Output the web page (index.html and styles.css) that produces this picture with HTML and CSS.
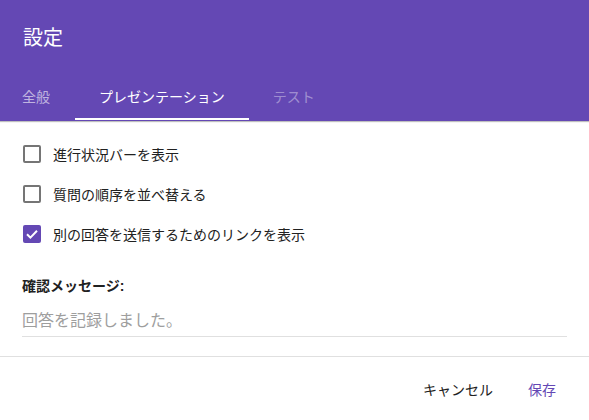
FILE: index.html
```html
<!DOCTYPE html>
<html lang="ja">
<head>
    <meta charset="UTF-8" />
    <title>設定</title>
    <link rel="stylesheet" href="styles.css">
</head>
<body>
    <div class="dialog">
        <div class="header">
            <h2 class="title">設定</h2>
            <div class="tabs">
                <div class="tab">全般</div>
                <div class="tab active">プレゼンテーション</div>
                <div class="tab disabled">テスト</div>
            </div>
        </div>

        <div class="content">
            <label class="check-row">
                <span class="checkbox"></span>
                <span>進行状況バーを表示</span>
            </label>
            <label class="check-row">
                <span class="checkbox"></span>
                <span>質問の順序を並べ替える</span>
            </label>
            <label class="check-row">
                <span class="checkbox checked">
                    <svg width="18" height="18" viewBox="0 0 18 18">
                        <polyline points="4,9.2 7.4,12.6 14,5.8" fill="none" stroke="#fff" stroke-width="2" />
                    </svg>
                </span>
                <span>別の回答を送信するためのリンクを表示</span>
            </label>

            <div class="field-label">確認メッセージ:</div>
            <div class="text-field">回答を記録しました。</div>
        </div>

        <div class="footer">
            <button class="btn">キャンセル</button>
            <button class="btn primary">保存</button>
        </div>
    </div>
</body>
</html>
```

FILE: styles.css
```css
/* Global Styles */
body {
    margin: 0;
    font-family: "Liberation Sans", "Noto Sans CJK JP", sans-serif;
    background-color: #fff;
    color: #212121;
}

.dialog {
    width: 589px;
    height: 420px;
    overflow: hidden;
}

/* Header with tabs */
.header {
    background-color: #6448b4;
    padding-top: 24px;
    height: 97px;
    box-shadow: 0 1px 1px rgba(0, 0, 0, 0.25);
    position: relative;
}

.title {
    margin: 0 0 21px 23px;
    font-size: 20px;
    line-height: 28px;
    font-weight: normal;
    color: #fff;
}

.tabs {
    display: flex;
    margin-left: -2px;
}

.tab {
    position: relative;
    padding: 0 24px;
    height: 48px;
    line-height: 48px;
    font-size: 14px;
    color: rgba(255, 255, 255, 0.6);
}

.tab.active {
    color: #fff;
    margin-left: 1px;
}

.tab.active::after {
    content: "";
    position: absolute;
    left: 0;
    right: 0;
    bottom: 1px;
    height: 2px;
    background-color: #fff;
}

.tab.disabled {
    color: rgba(255, 255, 255, 0.4);
}

/* Options */
.content {
    padding: 13px 22px 0 23px;
    height: 222px;
    border-bottom: 1px solid #e0e0e0;
}

.check-row {
    display: flex;
    align-items: center;
    gap: 12px;
    height: 40px;
    font-size: 14px;
}

.checkbox {
    box-sizing: border-box;
    width: 18px;
    height: 18px;
    border: 2px solid #757575;
    border-radius: 2px;
    flex-shrink: 0;
}

.checkbox.checked {
    border: none;
    background-color: #6448b4;
}

.checkbox svg {
    display: block;
}

.field-label {
    margin-top: 22px;
    margin-left: -1px;
    font-size: 14px;
    line-height: 20px;
    font-weight: bold;
    color: #212121;
}

.text-field {
    margin-top: 13px;
    margin-left: -1px;
    font-size: 16px;
    line-height: 24px;
    padding-bottom: 3px;
    color: #9e9e9e;
    border-bottom: 1px solid #e0e0e0;
}

/* Footer buttons */
.footer {
    display: flex;
    justify-content: flex-end;
    gap: 19px;
    padding: 14px 25px 0 0;
}

.btn {
    background: none;
    border: none;
    padding: 0 8px;
    height: 36px;
    font-family: inherit;
    font-size: 14px;
    color: #212121;
    cursor: pointer;
}

.btn.primary {
    color: #6448b4;
}
```
